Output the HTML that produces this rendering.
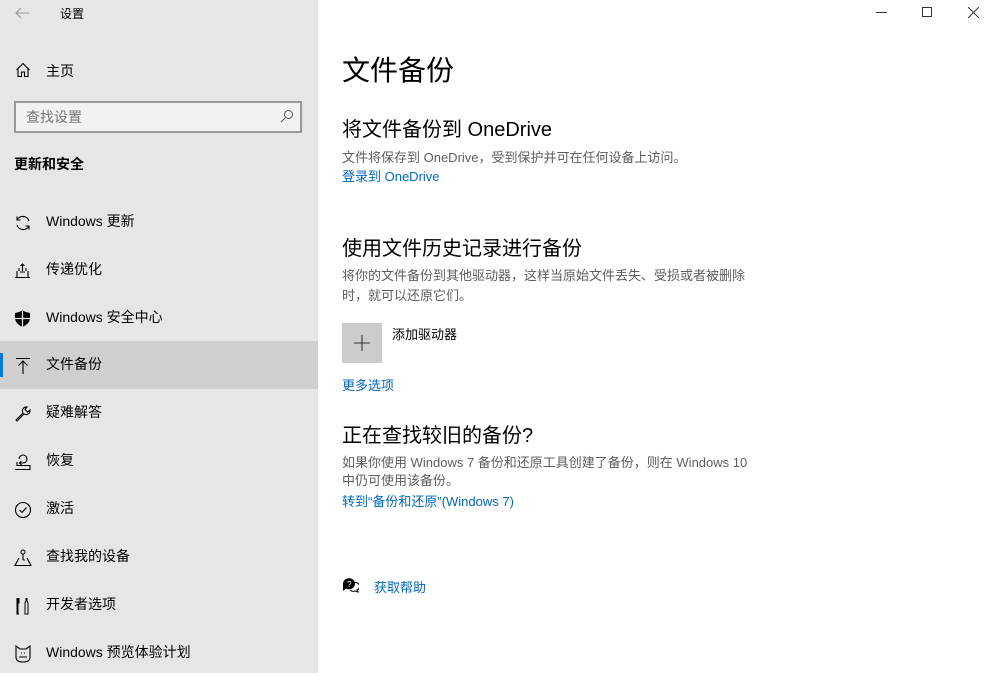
<!DOCTYPE html>
<html><head><meta charset="utf-8"><style>
*{margin:0;padding:0;box-sizing:border-box}
body{width:992px;height:673px;overflow:hidden;font-family:"Liberation Sans","Noto Sans CJK SC",sans-serif;background:#fff;position:relative;color:#000}
.side{position:absolute;left:0;top:0;width:318px;height:673px;background:#e6e6e6}
.a{position:absolute;white-space:nowrap}
.item{position:absolute;left:0;width:318px;height:48px;font-size:14px}
.item .t{position:absolute;left:46px;top:13px}
.item svg{position:absolute;left:14px;top:16px}
.sel{background:#cfcfcf}
.bar{position:absolute;left:0;top:12px;width:3px;height:24px;background:#0078d7}
.link{color:#0067c0}
.gray{color:#5d5d5d}
</style></head><body>
<div class="side">
 <svg class="a" style="left:14px;top:7px" width="16" height="12" viewBox="0 0 16 12"><path d="M15 6H2M7 1L2 6l5 5" stroke="#999" fill="none" stroke-width="1.1"/></svg>
 <div class="a" style="left:60px;top:5px;font-size:12px">设置</div>
 <svg class="a" style="left:15px;top:62px" width="16" height="16" viewBox="0 0 16 16"><path d="M1.5 8L8 1.5 14.5 8M3 6.5V14.5H6.5V10H9.5V14.5H13V6.5" stroke="#000" fill="none" stroke-width="1.1"/></svg>
 <div class="a" style="left:46px;top:61px;font-size:14px">主页</div>
 <div class="a" style="left:14px;top:101px;width:288px;height:32px;border:2px solid #999;background:#f2f2f2"></div>
 <div class="a" style="left:26px;top:107px;font-size:14px;color:#777">查找设置</div>
 <svg class="a" style="left:280px;top:109px" width="14" height="14" viewBox="0 0 14 14"><circle cx="8.5" cy="5.5" r="4" stroke="#555" fill="none"/><path d="M5.5 8.5L1 13" stroke="#555"/></svg>
 <div class="a" style="left:14px;top:154px;font-size:14px;font-weight:bold">更新和安全</div>

 <div class="item" style="top:198px"><svg width="18" height="18" viewBox="0 0 18 18"><path d="M15 7A6.5 6.5 0 0 0 3 6M3 11A6.5 6.5 0 0 0 15 12M3 2.5V6H6.5M15 15.5V12H11.5" stroke="#000" fill="none" stroke-width="1.1"/></svg><span class="t">Windows 更新</span></div>
 <div class="item" style="top:246px"><svg width="18" height="18" viewBox="0 0 18 18"><path d="M1 15.5H16M3 15.5V9M14 15.5V9M6 10H11M8.5 2V9M6.5 4L8.5 2 10.5 4M5 6V9M12 6V9" stroke="#000" fill="none" stroke-width="1.1"/></svg><span class="t">传递优化</span></div>
 <div class="item" style="top:294px"><svg width="18" height="18" viewBox="0 0 18 18"><path d="M1 3Q5 2.5 8.5 0.5 12 2.5 16 3V9Q15 14 8.5 17 2 14 1 9Z" fill="#000"/><path d="M8.5 1V17M1 8.5H16" stroke="#e6e6e6" stroke-width="1.3"/></svg><span class="t">Windows 安全中心</span></div>
 <div class="item sel" style="top:341px"><div class="bar"></div><svg width="18" height="18" viewBox="0 0 18 18"><path d="M2 1.5H16M9 4V17M4.5 8.5L9 4 13.5 8.5" stroke="#000" fill="none" stroke-width="1.1"/></svg><span class="t">文件备份</span></div>
 <div class="item" style="top:389px"><svg width="18" height="18" viewBox="0 0 18 18"><path d="M2 15L9 8A4 4 0 0 1 13 2L11 4.5 13.5 7 16 5A4 4 0 0 1 10 9L3 16Z" stroke="#000" fill="none" stroke-width="1.1"/></svg><span class="t">疑难解答</span></div>
 <div class="item" style="top:437px"><svg width="18" height="18" viewBox="0 0 18 18"><path d="M1 16.5H16V12.5H3V9M5 6A4 4 0 1 1 9 10H6M7.5 8L5.5 10 7.5 12" stroke="#000" fill="none" stroke-width="1.1"/></svg><span class="t">恢复</span></div>
 <div class="item" style="top:485px"><svg width="18" height="18" viewBox="0 0 18 18"><circle cx="9" cy="9" r="7.5" stroke="#000" fill="none" stroke-width="1.1"/><path d="M5.5 9L8 11.5 12.5 6.5" stroke="#000" fill="none" stroke-width="1.1"/></svg><span class="t">激活</span></div>
 <div class="item" style="top:533px"><svg width="18" height="18" viewBox="0 0 18 18"><circle cx="9" cy="3" r="2" stroke="#000" fill="none"/><path d="M9 5V11M5 9L1 16.5H17L13 9M9 11H11" stroke="#000" fill="none" stroke-width="1.1"/></svg><span class="t">查找我的设备</span></div>
 <div class="item" style="top:581px"><svg width="18" height="18" viewBox="0 0 18 18"><path d="M4 1V17M3 1V6H5V1M3 6V17H5M12 1V4L11 6V17H14V6L13 4V1" stroke="#000" fill="none" stroke-width="1"/></svg><span class="t">开发者选项</span></div>
 <div class="item" style="top:629px"><svg width="18" height="18" viewBox="0 0 18 18"><path d="M2 1L6 4H12L16 1V12Q16 17 9 17 2 17 2 12ZM5 12H13M7 8H8M10 8H11" stroke="#000" fill="none" stroke-width="1.1"/></svg><span class="t">Windows 预览体验计划</span></div>
</div>

<div class="a" style="left:876px;top:12px;width:11px;border-top:1px solid #333"></div>
<div class="a" style="left:922px;top:7px;width:10px;height:10px;border:1px solid #333"></div>
<svg class="a" style="left:968px;top:7px" width="11" height="11" viewBox="0 0 11 11"><path d="M0 0L11 11M11 0L0 11" stroke="#333"/></svg>

<div class="a" style="left:342px;top:49px;font-size:28px">文件备份</div>
<div class="a" style="left:342px;top:113px;font-size:20px">将文件备份到 OneDrive</div>
<div class="a gray" style="left:342px;top:147px;font-size:13px">文件将保存到 OneDrive，受到保护并可在任何设备上访问。</div>
<div class="a link" style="left:342px;top:166px;font-size:13px">登录到 OneDrive</div>
<div class="a" style="left:342px;top:232px;font-size:20px">使用文件历史记录进行备份</div>
<div class="a gray" style="left:342px;top:266px;font-size:13px;line-height:20px">将你的文件备份到其他驱动器，这样当原始文件丢失、受损或者被删除<br>时，就可以还原它们。</div>
<div class="a" style="left:342px;top:323px;width:40px;height:40px;background:#cccccc"></div>
<svg class="a" style="left:353px;top:334px" width="18" height="18" viewBox="0 0 18 18"><path d="M9 1V17M1 9H17" stroke="#333" stroke-width="1.1"/></svg>
<div class="a" style="left:392px;top:324px;font-size:13px">添加驱动器</div>
<div class="a link" style="left:342px;top:375px;font-size:13px">更多选项</div>
<div class="a" style="left:342px;top:419px;font-size:20px">正在查找较旧的备份?</div>
<div class="a gray" style="left:342px;top:454px;font-size:13px;line-height:18px">如果你使用 Windows 7 备份和还原工具创建了备份，则在 Windows 10<br>中仍可使用该备份。</div>
<div class="a link" style="left:342px;top:491px;font-size:13px">转到“备份和还原”(Windows 7)</div>
<svg class="a" style="left:342px;top:577px" width="17" height="16" viewBox="0 0 17 16"><path d="M1 7A6 5.5 0 1 1 4 11.5L1 14Z" fill="#000"/><path d="M12 5.5A4.5 4 0 0 1 15 13L16 15 13 14A4.5 4 0 0 1 8 13" stroke="#000" fill="none"/><text x="5" y="10" font-size="8" fill="#fff" font-family="Liberation Sans">?</text></svg>
<div class="a link" style="left:374px;top:577px;font-size:13px">获取帮助</div>
</body></html>
